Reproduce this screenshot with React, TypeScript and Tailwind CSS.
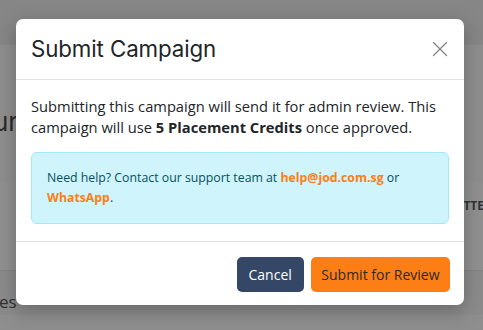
import { X } from "lucide-react";

const bodyFont = { fontFamily: '"Open Sans", "Noto Sans", sans-serif' };

export default function App() {
    return (
        <div className="relative h-[330px] w-[483px] overflow-hidden bg-[#8e8e8e]" style={bodyFont}>
            {/* page behind the overlay */}
            <div className="h-[45px] border-b border-[#8a8a8a] bg-[#868686]" />
            <div className="flex h-[225px] flex-col">
                <div
                    className="pt-[64px] text-[26px] leading-none text-[#2a2a2a]"
                    style={{ fontFamily: 'Inter, sans-serif' }}
                >
                    <span className="-ml-[7px]">ur</span>
                </div>
                <div className="mt-auto flex h-[87px] justify-end bg-[#909090] text-[12px] font-bold text-[#333333]">
                    <span className="mt-[14px] mr-[-1px]">TTE</span>
                </div>
            </div>
            <div className="border-t border-[#858585] bg-[#8b8b8b] pt-[18px] text-[17px] text-[#2f2f2f]">
                <span className="-ml-[1px]">es</span>
            </div>

            {/* modal */}
            <div className="absolute inset-0 flex items-start pt-[19px] pl-[16px]">
                <div className="w-[448px] rounded-[7px] bg-white shadow-[0_6px_20px_rgba(0,0,0,0.25)]">
                    <div className="flex h-[61px] items-center justify-between border-b border-[#dee2e6] pl-[15px] pr-[10px]">
                        <h2
                            className="text-[22.3px] font-normal text-[#212529]"
                            style={{ fontFamily: 'Inter, "Noto Sans", sans-serif', letterSpacing: "-0.1px" }}
                        >
                            Submit Campaign
                        </h2>
                        <button className="flex h-[28px] w-[28px] items-center justify-center text-[#858585]">
                            <X size={26} strokeWidth={1.2} />
                        </button>
                    </div>
                    <div className="px-[15px] pt-[16px] pb-[17px] text-[14.7px] leading-[21px] text-[#212529]">
                        <p>
                            Submitting this campaign will send it for admin review. This campaign will use{" "}
                            <strong className="font-bold">5 Placement Credits</strong> once approved.
                        </p>
                        <div className="mt-[14px] rounded-[6px] border border-[#9eeaf9] bg-[#cff4fc] px-[15px] py-[15px] text-[12.3px] leading-[20px] text-[#055160]">
                            Need help? Contact our support team at{" "}
                            <a className="font-bold text-[#fd7e14]">help@jod.com.sg</a> or{" "}
                            <a className="font-bold text-[#fd7e14]">WhatsApp</a>.
                        </div>
                    </div>
                    <div className="flex justify-end gap-[7px] border-t border-[#dee2e6] px-[14px] pt-[15px] pb-[13px] text-[14px]">
                        <button className="h-[35px] rounded-[5px] bg-[#344767] px-[12px] text-white">Cancel</button>
                        <button className="h-[35px] rounded-[5px] bg-[#fd7e14] px-[10.5px] text-[#2b2b2b]">
                            Submit for Review
                        </button>
                    </div>
                </div>
            </div>
        </div>
    );
}
